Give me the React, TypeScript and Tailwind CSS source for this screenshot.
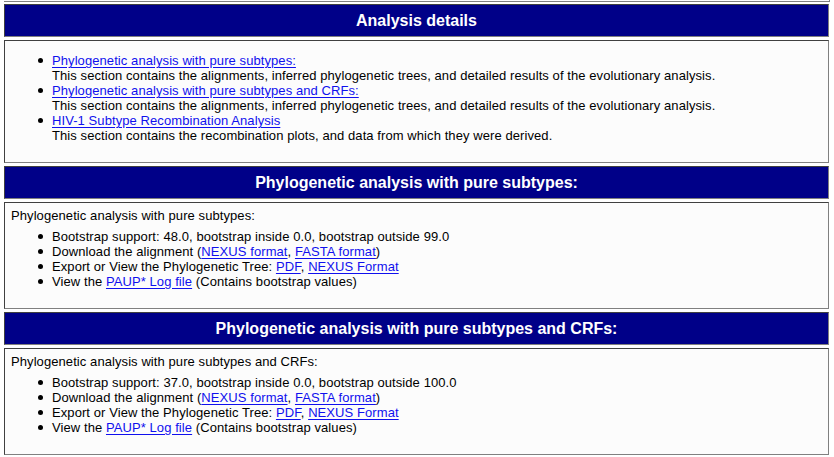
import React from 'react';

const font = { fontFamily: '"Liberation Sans", Arial, Helvetica, sans-serif' };

const A: React.FC<{ children: React.ReactNode }> = ({ children }) => (
  <a href="#" className="text-[#1010ee] underline underline-offset-[2px]">
    {children}
  </a>
);

const Header: React.FC<{ title: string }> = ({ title }) => (
  <div className="h-[33px] bg-[#000088] border border-t-[#404040] border-l-[#404040] border-r-[#808080] border-b-[#808080] flex items-center justify-center">
    <h2 className="text-white font-bold text-[16px]">{title}</h2>
  </div>
);

const Cell: React.FC<{ h: string; children: React.ReactNode }> = ({ h, children }) => (
  <div className={`${h} bg-[#fcfcfc] border border-t-[#404040] border-l-[#404040] border-r-[#808080] border-b-[#808080]`}>
    {children}
  </div>
);

const Bullet: React.FC<{ children: React.ReactNode }> = ({ children }) => (
  <li className="flex">
    <span className="w-[14px] shrink-0 flex items-center">
      <span className="w-[5px] h-[5px] rounded-full bg-black" />
    </span>
    <span>{children}</span>
  </li>
);

const Results: React.FC<{ title: string; support: string; outside: string }> = ({ title, support, outside }) => (
  <Cell h="h-[107px]">
    <div className="pl-[6px] pt-[5px] text-[13px] leading-[15px] tracking-[0.08px] text-black">
      <p>{title}</p>
      <ul className="mt-[6px] pl-[27px]">
        <Bullet>Bootstrap support: {support}, bootstrap inside 0.0, bootstrap outside {outside}</Bullet>
        <Bullet>
          Download the alignment (<A>NEXUS format</A>, <A>FASTA format</A>)
        </Bullet>
        <Bullet>
          Export or View the Phylogenetic Tree: <A>PDF</A>, <A>NEXUS Format</A>
        </Bullet>
        <Bullet>
          View the <A>PAUP* Log file</A> (Contains bootstrap values)
        </Bullet>
      </ul>
    </div>
  </Cell>
);

export default function App() {
  return (
    <div className="w-[834px] h-[457px] bg-white overflow-hidden relative" style={font}>
      <div className="absolute left-[4px] right-[4px] top-[-10px] h-[12px] bg-[#fcfcfc] border-r border-b border-r-[#808080] border-b-[#808080]" />
      <div className="flex flex-col gap-[3px] pt-[4px] pl-[4px] pr-[5px]">
        <Header title="Analysis details" />
        <Cell h="h-[123px]">
          <ul className="pt-[12px] pl-[33px] text-[13px] leading-[15px] tracking-[0.08px] text-black">
            <Bullet>
              <A>Phylogenetic analysis with pure subtypes:</A>
            </Bullet>
            <li className="pl-[14px]">
              This section contains the alignments, inferred phylogenetic trees, and detailed results of the evolutionary analysis.
            </li>
            <Bullet>
              <A>Phylogenetic analysis with pure subtypes and CRFs:</A>
            </Bullet>
            <li className="pl-[14px]">
              This section contains the alignments, inferred phylogenetic trees, and detailed results of the evolutionary analysis.
            </li>
            <Bullet>
              <A>HIV-1 Subtype Recombination Analysis</A>
            </Bullet>
            <li className="pl-[14px]">
              This section contains the recombination plots, and data from which they were derived.
            </li>
          </ul>
        </Cell>
        <Header title="Phylogenetic analysis with pure subtypes:" />
        <Results title="Phylogenetic analysis with pure subtypes:" support="48.0" outside="99.0" />
        <Header title="Phylogenetic analysis with pure subtypes and CRFs:" />
        <Results title="Phylogenetic analysis with pure subtypes and CRFs:" support="37.0" outside="100.0" />
      </div>
    </div>
  );
}
